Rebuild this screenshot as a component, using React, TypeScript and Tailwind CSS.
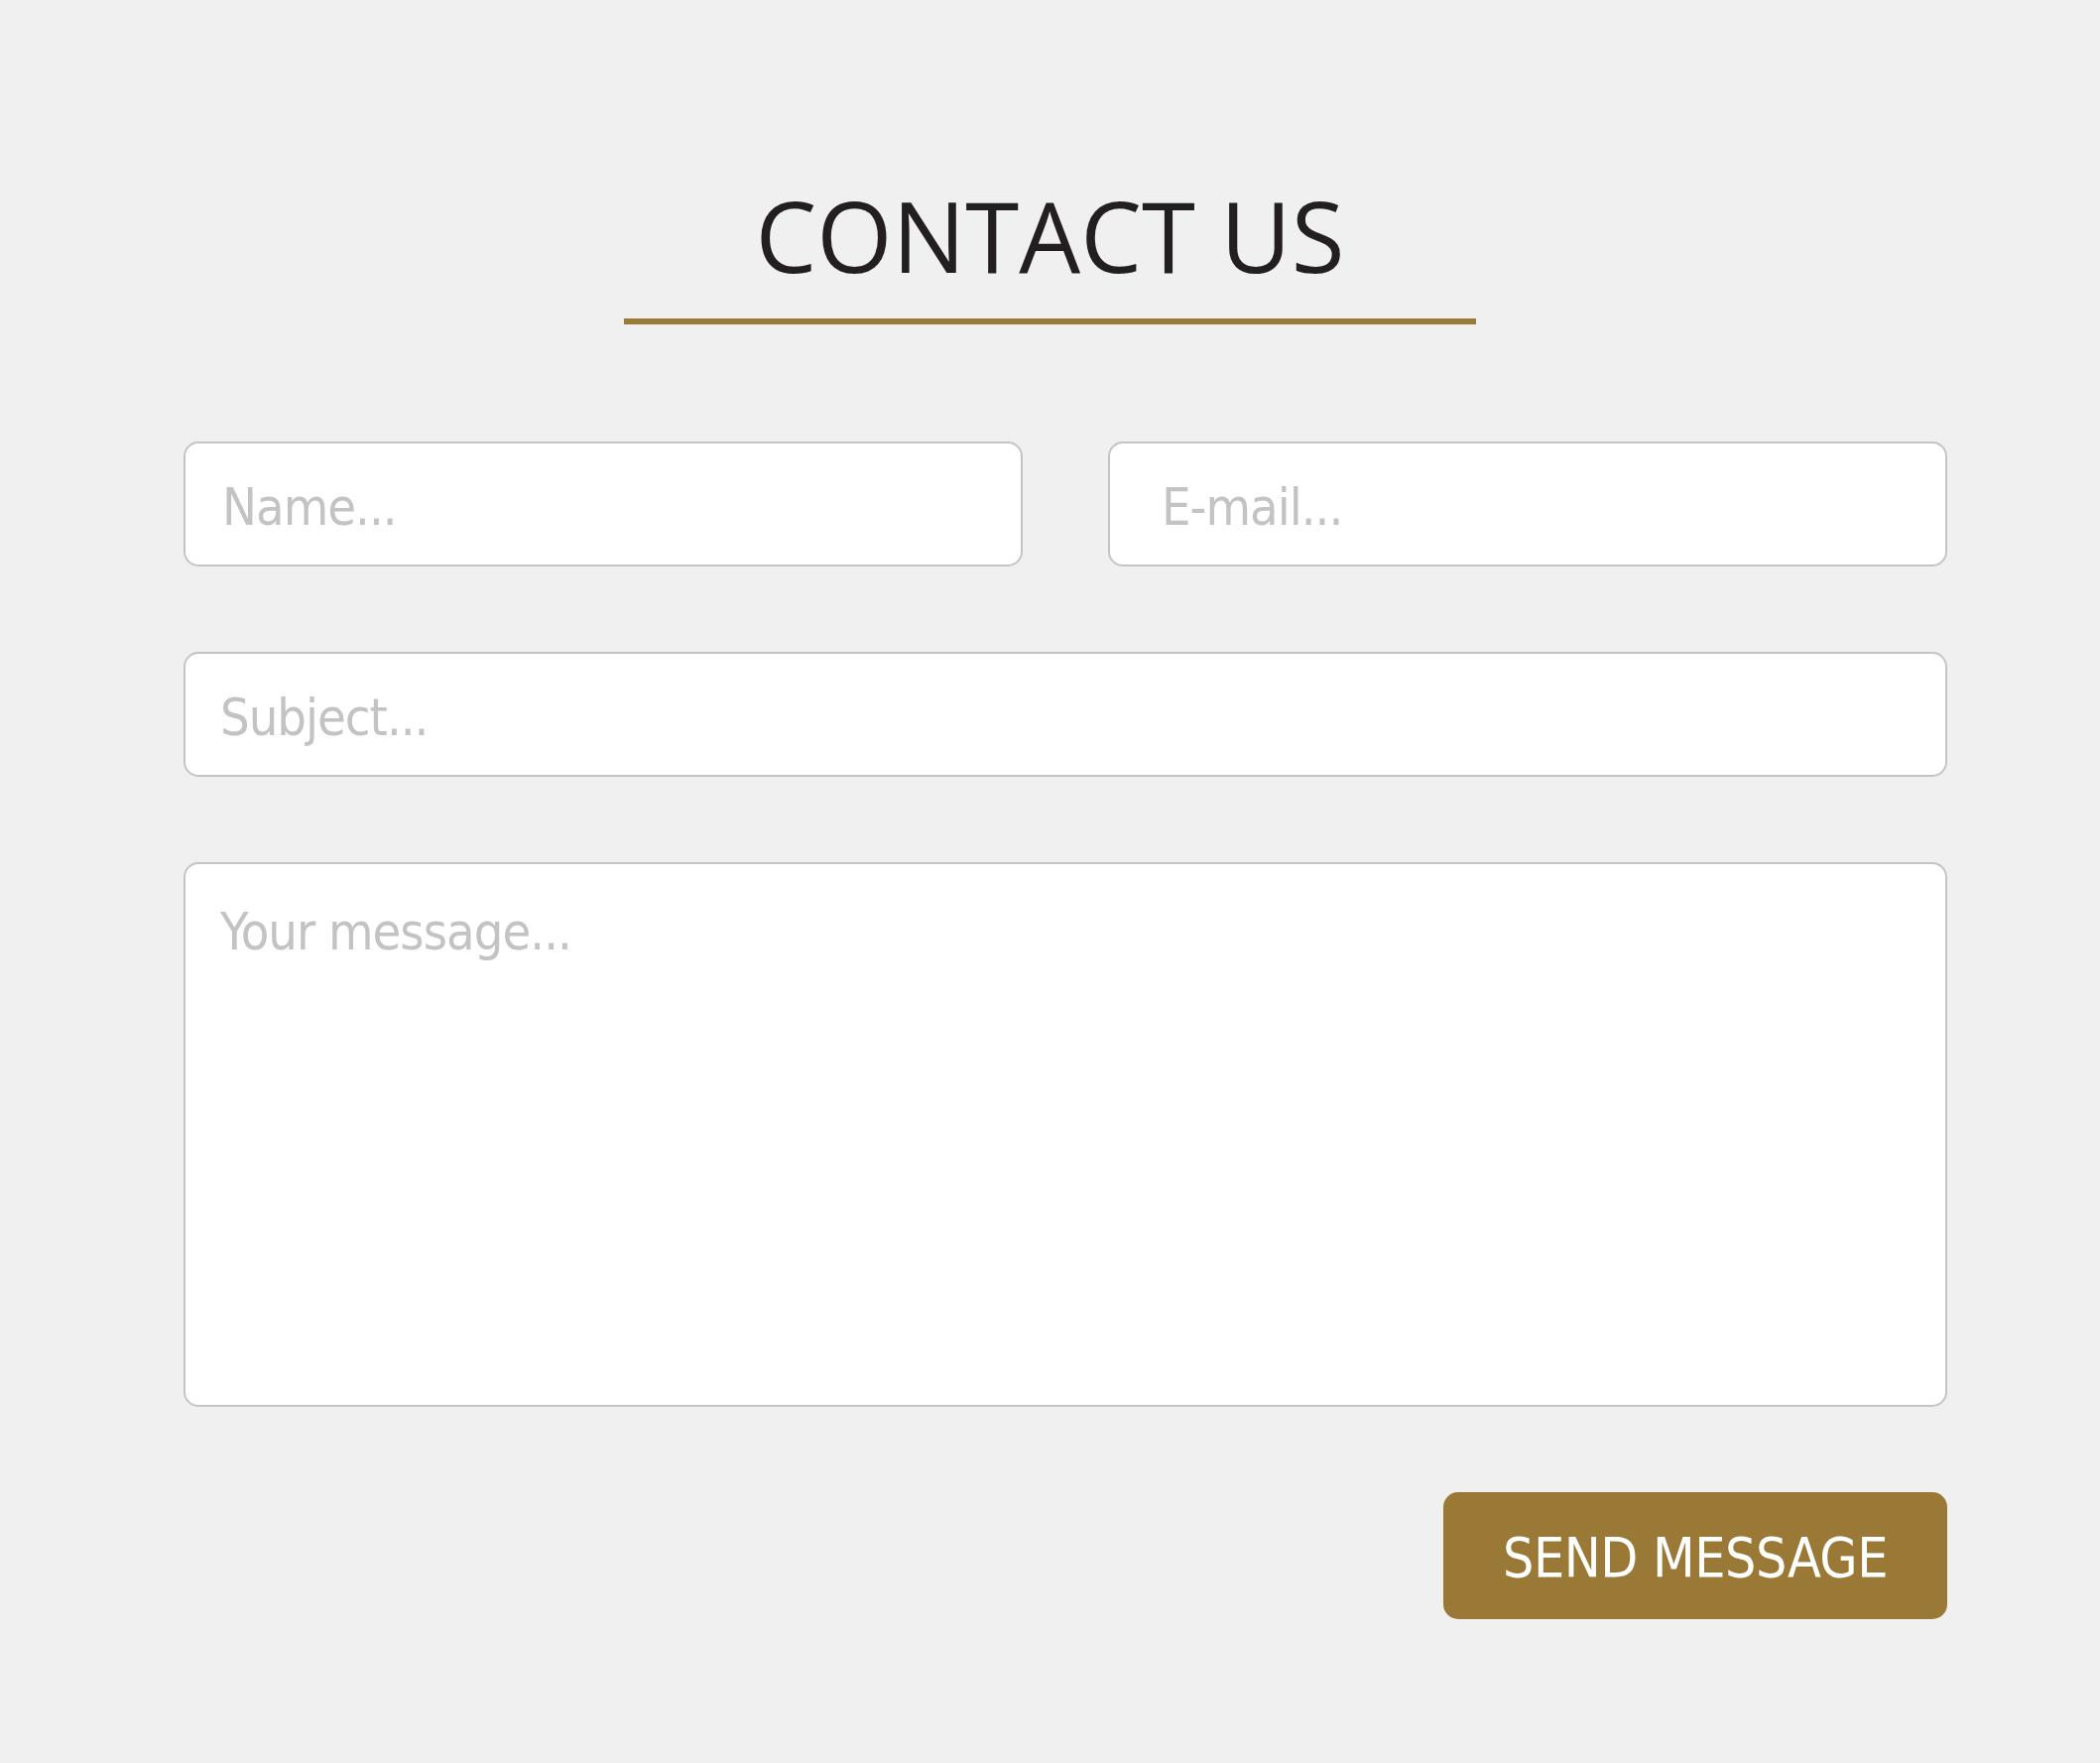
import React from "react";

const fieldFont = {
  fontFamily: '"DejaVu Sans Condensed", "DejaVu Sans", Tahoma, sans-serif',
};

function ContactForm() {
  return (
    <div className="min-h-[1777px] w-full bg-[#f0f0f0] pt-[188px]">
      <div className="flex flex-col items-center">
        <h1
          className="text-[98px] leading-[98px] text-[#231f20] font-normal"
          style={{ fontFamily: '"Open Sans", "Noto Sans", sans-serif' }}
        >
          CONTACT US
        </h1>
        <div className="mt-[35px] h-[6px] w-[859px] bg-[#9b7a36]" />
      </div>

      <form
        className="ml-[185px] mt-[118px] flex w-[1778px] flex-col gap-[86px]"
        style={fieldFont}
        onSubmit={(e) => e.preventDefault()}
      >
        <div className="flex gap-[86px]">
          <input
            type="text"
            placeholder="Name..."
            className="h-[126px] w-[846px] rounded-[15px] border-2 border-[#c4c4c4] bg-white pl-[37px] pt-[6px] text-[52px] tracking-[-1px] text-[#555] outline-none placeholder:text-[#c3c3c3]"
          />
          <input
            type="email"
            placeholder="E-mail..."
            className="h-[126px] w-[846px] rounded-[15px] border-2 border-[#c4c4c4] bg-white pl-[52px] pt-[6px] text-[52px] tracking-[-1px] text-[#555] outline-none placeholder:text-[#c3c3c3]"
          />
        </div>
        <input
          type="text"
          placeholder="Subject..."
          className="h-[126px] w-full rounded-[15px] border-2 border-[#c4c4c4] bg-white pl-[35px] pt-[6px] text-[52px] tracking-[-1px] text-[#555] outline-none placeholder:text-[#c3c3c3]"
        />
        <textarea
          placeholder="Your message..."
          className="h-[549px] w-full resize-none rounded-[15px] border-2 border-[#c4c4c4] bg-white pl-[35px] pt-[37px] text-[52px] leading-[62px] tracking-[-1px] text-[#555] outline-none placeholder:text-[#c3c3c3]"
        />
        <div className="flex justify-end">
          <button
            type="submit"
            className="h-[128px] w-[508px] rounded-[15px] bg-[#9a7936] pt-[5px] text-[55px] tracking-[-0.5px] text-white"
          >
            SEND MESSAGE
          </button>
        </div>
      </form>
    </div>
  );
}

export default function App() {
  return <ContactForm />;
}
